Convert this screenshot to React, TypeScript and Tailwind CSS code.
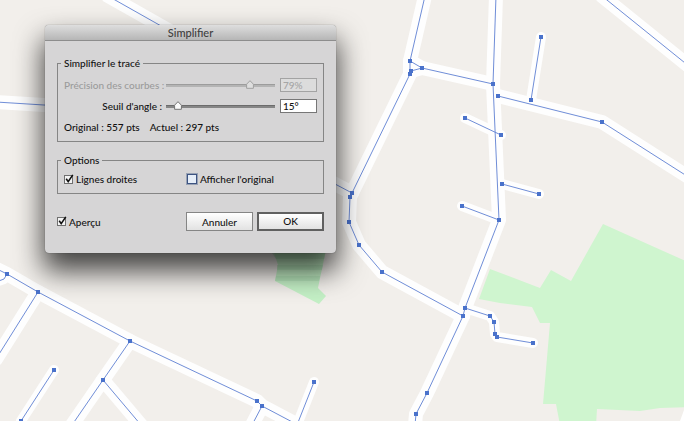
import { useState } from 'react';
import clsx from 'clsx';

type Point = [number, number];

const mainRoads: Point[][] = [
  [[425, -4], [410, 61], [410, 74], [352, 193], [350, 197], [349, 222], [359, 245], [382, 272], [463, 316]],
  [[410, 61], [422, 68], [411, 71]],
  [[422, 68], [493, 84]],
  [[496, -4], [493, 84], [499, 220], [465, 308], [463, 316], [427, 393], [416, 414], [415, 425]],
  [[498, 96], [602, 122], [690, 178]],
  [[602, -4], [690, 67]],
  [[-5, 268], [7, 274], [38, 292], [130, 341], [257, 401], [262, 406], [298, 425]],
  [[38, 292], [-4, 359]],
  [[130, 341], [103, 380], [72, 425]],
  [[103, 380], [141, 425]],
  [[262, 406], [252, 425]],
  [[108, -4], [170, 31]],
  [[-4, 102], [60, 106]],
  [[320, 176], [352, 193]],
];

const smallRoads: Point[][] = [
  [[541, 37], [531, 100]],
  [[465, 118], [501, 135]],
  [[502, 184], [539, 194]],
  [[462, 206], [499, 220]],
  [[465, 308], [490, 316], [494, 322], [495, 334], [497, 337], [533, 343]],
  [[7, 274], [4, 279], [-4, 282]],
  [[54, 370], [21, 421]],
  [[314, 382], [297, 425]],
];

const nodes: Point[] = [
  [410, 61], [410, 74], [411, 71], [422, 68], [493, 84], [498, 96], [602, 122], [541, 37], [531, 100],
  [465, 118], [501, 135], [502, 184], [539, 194], [462, 206], [499, 220], [352, 193], [350, 197],
  [349, 222], [359, 245], [382, 272], [463, 316], [465, 308], [490, 316], [494, 322], [495, 334],
  [497, 337], [533, 343], [427, 393], [416, 414], [7, 274], [38, 292], [130, 341], [103, 380],
  [257, 401], [262, 406], [54, 370], [21, 421], [314, 382],
];

const toPoints = (line: Point[]) => line.map((p) => p.join(',')).join(' ');

const StreetMap = () => (
  <svg
    className="absolute inset-0 h-full w-full"
    viewBox="0 0 684 421"
    preserveAspectRatio="xMinYMin slice"
    fill="none"
    aria-hidden="true"
  >
    <polygon
      fill="#cff5cf"
      points="490,269 540,288 551,270 571,281 603,224 690,263 690,407 660,408 640,411 597,409 596,425 560,425 556,404 543,404 550,323 540,323 532,307 500,303 479,299"
    />
    <polygon fill="#c4f0c6" points="270,240 328,240 318,288 326,296 319,304 275,281 278,265" />
    <g fill="#a9dcb0" fillOpacity="0.5">
      <polygon points="270,250 326,250 324,259 276,259" />
      <polygon points="277,265 323,265 322,270 277,270" />
      <polygon points="276,276 320,276 319,281 275,281" />
    </g>
    <path d="M684 410 L680 421 H684 Z" fill="#fff" />
    <g stroke="#fefefe" strokeLinejoin="round" strokeLinecap="round">
      {mainRoads.map((line, i) => (
        <polyline key={i} points={toPoints(line)} strokeWidth="14" />
      ))}
      {smallRoads.map((line, i) => (
        <polyline key={i} points={toPoints(line)} strokeWidth="10" />
      ))}
    </g>
    <g stroke="#5f80d2" strokeWidth="0.9">
      {[...mainRoads, ...smallRoads].map((line, i) => (
        <polyline key={i} points={toPoints(line)} />
      ))}
    </g>
    <g fill="#4a72cb">
      {nodes.map(([x, y], i) => (
        <rect key={i} x={x - 2} y={y - 2} width="4" height="4" />
      ))}
    </g>
  </svg>
);

interface SliderRowProps {
  id: string;
  label: string;
  unit: string;
  value: number;
  max: number;
  disabled?: boolean;
  onChange: (value: number) => void;
}

const SliderRow = ({ id, label, unit, value, max, disabled, onChange }: SliderRowProps) => (
  <div className="flex h-[14px] items-center">
    <label htmlFor={id} className={clsx('w-[98px] text-right whitespace-nowrap', disabled && 'text-[#9b9b9b]')}>
      {label} :
    </label>
    <div className="relative ml-[4px] h-[10px] flex-1">
      <input
        id={id}
        type="range"
        min={0}
        max={max}
        value={value}
        disabled={disabled}
        onChange={(e) => onChange(Number(e.target.value))}
        className={clsx(
          'block h-[10px] w-full appearance-none bg-transparent [&::-webkit-slider-runnable-track]:h-[3px] [&::-webkit-slider-runnable-track]:border-t [&::-webkit-slider-thumb]:h-[2px] [&::-webkit-slider-thumb]:w-2 [&::-webkit-slider-thumb]:appearance-none',
          disabled
            ? '[&::-webkit-slider-runnable-track]:border-[#9c9c9c] [&::-webkit-slider-runnable-track]:bg-[#b4b4b4]'
            : '[&::-webkit-slider-runnable-track]:border-[#6c6c6c] [&::-webkit-slider-runnable-track]:bg-[#868686]',
        )}
      />
      <div className="pointer-events-none absolute inset-y-0 left-0 right-2">
        <svg
          className="absolute top-0 h-[9px] w-2"
          style={{ left: `${(value / max) * 100}%` }}
          viewBox="0 0 8 9"
          aria-hidden="true"
        >
          <path
            d="M4 .7 L7.4 4.2 V8.3 H.6 V4.2 Z"
            fill={disabled ? '#dedede' : '#fafafa'}
            stroke={disabled ? '#9a9a9a' : '#6a6a6a'}
            strokeWidth="0.9"
          />
        </svg>
      </div>
    </div>
    <input
      type="text"
      aria-label={label}
      value={`${value}${unit}`}
      disabled={disabled}
      onChange={(e) => onChange(Math.min(max, parseInt(e.target.value, 10) || 0))}
      className={clsx(
        'ml-[5px] h-[14px] w-[37px] border pl-[2px]',
        disabled ? 'border-[#a3a3a3] bg-[#dcdcdc] text-[#a6a6a6]' : 'border-[#777] bg-white text-[#111]',
      )}
    />
  </div>
);

interface CheckProps {
  label: string;
  checked: boolean;
  focused?: boolean;
  onChange: (checked: boolean) => void;
}

const Check = ({ label, checked, focused, onChange }: CheckProps) => (
  <label className="flex h-[14px] items-center gap-[3px]">
    <span className="relative block">
      <input
        type="checkbox"
        checked={checked}
        onChange={(e) => onChange(e.target.checked)}
        className={clsx(
          'block appearance-none',
          focused
            ? 'size-[10px] border border-[#3d5482] bg-[#e6eef8] ring-1 ring-[#3d5482]/40'
            : 'size-[9px] border border-[#707070] bg-[#f4f4f4]',
        )}
      />
      {checked && (
        <svg className="pointer-events-none absolute left-0 -top-px h-[10px] w-[10px]" viewBox="0 0 10 10" fill="none">
          <path d="M2.2 4.8 L4.2 7.6 L8.8 .9" stroke="#111" strokeWidth="1.6" />
        </svg>
      )}
    </span>
    {label}
  </label>
);

export default function App() {
  const [precision, setPrecision] = useState(79);
  const [angle, setAngle] = useState(15);
  const [straight, setStraight] = useState(true);
  const [showOriginal, setShowOriginal] = useState(false);
  const [preview, setPreview] = useState(true);

  return (
    <main className="relative min-h-screen overflow-hidden bg-[#f2efeb] pl-[45px] pt-[25px]">
      <StreetMap />
      <div
        role="dialog"
        aria-labelledby="dialog-title"
        className="relative w-[291px] rounded-[4px] bg-[#d6d5d6] font-[Lato,sans-serif] text-[10px] leading-[14px] font-medium text-[#111] shadow-[0_0_1px_rgba(0,0,0,0.6),0_16px_28px_2px_rgba(0,0,0,0.72)]"
      >
        <h1
          id="dialog-title"
          className="h-4 rounded-t-[4px] border-b border-[#8d8d8d] bg-linear-to-b from-[#dedede] to-[#b6b6b6] text-center text-[11px] leading-4 text-[#404040]"
        >
          Simplifier
        </h1>
        <form className="px-3 pt-[15px] pb-[22px]" onSubmit={(e) => e.preventDefault()}>
          <fieldset className="border border-[#858585] px-[6px] pb-[7px]">
            <legend className="-ml-[3px] px-[3px]">Simplifier le tracé</legend>
            <div className="flex flex-col gap-[7px] pt-2">
              <SliderRow
                id="precision"
                label="Précision des courbes"
                unit="%"
                value={precision}
                max={100}
                disabled
                onChange={setPrecision}
              />
              <SliderRow id="angle" label="Seuil d'angle" unit="°" value={angle} max={180} onChange={setAngle} />
              <p className="flex gap-[10px]">
                <span>Original : 557 pts</span>
                <span>Actuel : 297 pts</span>
              </p>
            </div>
          </fieldset>

          <fieldset className="mt-[11px] border border-[#858585] px-[6px] pb-[7px]">
            <legend className="-ml-[3px] px-[3px]">Options</legend>
            <div className="grid grid-cols-[123px_1fr] pt-[5px]">
              <Check label="Lignes droites" checked={straight} onChange={setStraight} />
              <Check label="Afficher l'original" checked={showOriginal} focused onChange={setShowOriginal} />
            </div>
          </fieldset>

          <div className="mt-[18px] flex items-center gap-1">
            <Check label="Aperçu" checked={preview} onChange={setPreview} />
            <button
              type="button"
              className="ml-auto h-[19px] w-[67px] border border-[#858585] bg-linear-to-b from-white to-[#e2e2e2]"
            >
              Annuler
            </button>
            <button
              type="submit"
              className="h-[19px] w-[67px] border-2 border-[#606060] bg-linear-to-b from-white to-[#e2e2e2] leading-[13px]"
            >
              OK
            </button>
          </div>
        </form>
      </div>
    </main>
  );
}
